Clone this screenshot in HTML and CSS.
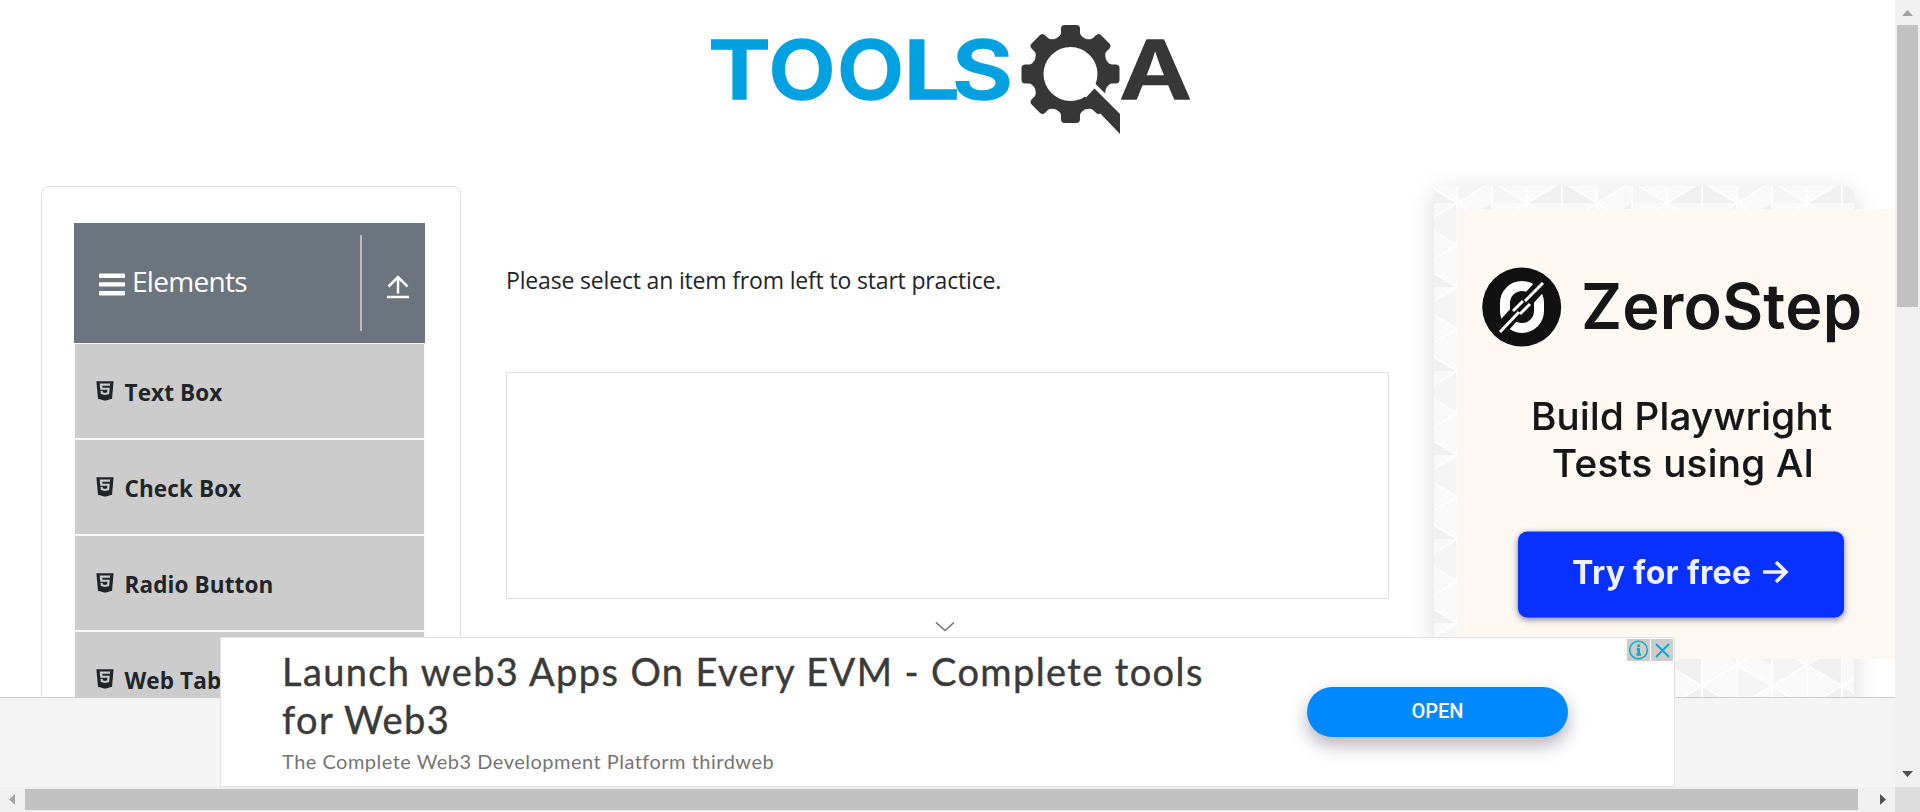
FILE: index.html
```html
<!DOCTYPE html>
<html lang="en">
<head>
<meta charset="utf-8">
<title>ToolsQA</title>
<link rel="stylesheet" href="styles.css">
</head>
<body>
<svg class="defs" width="0" height="0" aria-hidden="true">
  <symbol id="html5" viewBox="0 0 1024 1024">
    <path fill-rule="evenodd" d="M145 96l66 746.600L512 928l299.600-85.400L878.900 96H145zM720.900 286.300H396.100l7.700 89.200h309.500l-23.500 262.500-177.800 49.900-177.400-49.900-12-135.800h86.900l6.200 68.200 96.300 26.400 96.600-26.400 10.200-112.300H311.900l-23.800-262.100h441z"/>
  </symbol>
</svg>
<div class="window">
  <div class="page">
    <header class="top">
      <svg class="logo" width="520" height="160" viewBox="0 0 520 160" role="img" aria-label="ToolsQA">
        <g class="logo-blue">
          <text x="18" y="99" textLength="63" lengthAdjust="spacingAndGlyphs">T</text>
          <text x="78.500" y="99" textLength="67" lengthAdjust="spacingAndGlyphs">O</text>
          <text x="147" y="99" textLength="67" lengthAdjust="spacingAndGlyphs">O</text>
          <text x="213" y="99" textLength="57" lengthAdjust="spacingAndGlyphs">L</text>
          <text x="262" y="99" textLength="61" lengthAdjust="spacingAndGlyphs">S</text>
        </g>
        <g fill="#373737" transform="translate(380.500 74)">
          <mask id="ring"><rect x="-60" y="-60" width="120" height="130" fill="#fff"/><circle r="27" fill="#000"/><path d="M12 20 L24 9 L66 50 L66 75 Z" fill="#000"/></mask>
          <g mask="url(#ring)">
            <circle r="38.500"/>
            <path id="tooth" d="M-14 -36 Q-10 -38 -9.500 -41 V-45 Q-9.500 -49 -6 -49 H6 Q9.500 -49 9.500 -45 V-41 Q10 -38 14 -36 Z"/>
            <use href="#tooth" transform="rotate(45)"/><use href="#tooth" transform="rotate(90)"/><use href="#tooth" transform="rotate(135)"/>
            <use href="#tooth" transform="rotate(180)"/><use href="#tooth" transform="rotate(225)"/><use href="#tooth" transform="rotate(270)"/><use href="#tooth" transform="rotate(315)"/>
          </g>
          <path d="M15 24 L24 14.500 L49.500 40 V60 Z"/>
        </g>
        <text class="logo-dark" x="429.500" y="99" textLength="72" lengthAdjust="spacingAndGlyphs">A</text>
      </svg>
    </header>
    <div class="columns">
      <aside class="card">
        <div class="group">
          <svg class="bars" width="26" height="23" viewBox="0 0 26 23" fill="#fff"><rect y="0.500" width="26" height="4.400" rx="1.200"/><rect y="9.200" width="26" height="4.400" rx="1.200"/><rect y="18" width="26" height="4.400" rx="1.200"/></svg>
          <span class="group-name">Elements</span>
          <span class="divider"></span>
          <svg class="up" width="22" height="24" viewBox="0 0 22 24" fill="none" stroke="#fff" stroke-width="2.500"><path d="M11 18.500V2M1.500 11.500L11 2l9.500 9.500M0 22h22"/></svg>
        </div>
        <ul class="menu">
          <li><svg class="h5"><use href="#html5"/></svg><span>Text Box</span></li>
          <li><svg class="h5"><use href="#html5"/></svg><span>Check Box</span></li>
          <li><svg class="h5"><use href="#html5"/></svg><span>Radio Button</span></li>
          <li><svg class="h5"><use href="#html5"/></svg><span>Web Tables</span></li>
        </ul>
      </aside>
      <main class="content">
        <p class="hint"><span>Please select an item from left to start practice.</span></p>
        <div class="slot"></div>
      </main>
      <aside class="promo">
        <svg class="tiles" width="420" height="520">
          <pattern id="tri" x="23" y="17" width="140" height="84" patternUnits="userSpaceOnUse">
            <rect width="140" height="84" fill="#f9f9f9"/>
            <path fill="#f0f0f0" d="M70 84L105 63V84ZM105 84V63L140 84ZM70 42L105 21V63ZM0 21L35 0V42Z"/>
            <path fill="#f5f5f5" d="M35 84V63L70 84ZM35 21L70 42L35 63ZM0 42L35 63L0 84ZM105 21L140 0V42Z"/>
            <path fill="none" stroke="#fff" stroke-width="1.600" d="M0 0V84M35 0V84M70 0V84M105 0V84M140 0V84M0 0L140 84M0 84L140 0M0 42L70 84L140 42L70 0Z"/>
          </pattern>
          <rect width="420" height="520" fill="url(#tri)"/>
        </svg>
        <svg class="ad" width="438" height="450" viewBox="0 0 438 450">
          <rect width="438" height="450" fill="#fdf8f2"/>
          <g class="soft">
            <circle cx="64.700" cy="98" r="39.500" fill="#111"/>
            <g fill="none" stroke="#fff" stroke-width="10">
              <rect x="48" y="77" width="34" height="42" rx="17"/>
              <path stroke="#111" stroke-width="13" d="M42 122L87 73"/>
              <path stroke-width="3" d="M43 123L62 103M68 92L86 74M56 102L66 92M63 105L73 95"/>
            </g>
            <text class="brand" x="124" y="119.500" textLength="281">ZeroStep</text>
            <text class="tag" x="74" y="221" textLength="301">Build Playwright</text>
            <text class="tag" x="95" y="268" textLength="262">Tests using AI</text>
            <rect class="cta" x="61" y="322.500" width="326" height="86" rx="9"/>
            <text class="cta-text" x="115" y="374.500" textLength="179">Try for free</text>
            <path fill="none" stroke="#eef1ff" stroke-width="3.600" d="M306 363H328M319 353L329 363L319 373"/>
          </g>
        </svg>
      </aside>
    </div>
    <footer class="foot"></footer>
    <div class="banner">
      <svg class="collapse" width="20" height="10" viewBox="0 0 20 10" fill="none" stroke="#777" stroke-width="1.600"><path d="M1 0.500L10 8.500L19 0.500"/></svg>
      <div class="copy">
        <div class="headline"><span>Launch web3 Apps On Every EVM - Complete tools</span><br><span>for Web3</span></div>
        <div class="sub"><span>The Complete Web3 Development Platform thirdweb</span></div>
      </div>
      <div class="open"><span>OPEN</span></div>
      <div class="choices">
        <svg width="23" height="22" viewBox="0 0 23 22"><rect width="23" height="22" fill="#ccc"/><circle cx="11.500" cy="11" r="8.800" fill="none" stroke="#00aecd" stroke-width="1.500"/><path fill="none" stroke="#00aecd" stroke-width="2.600" d="M11.700 9.200V16M11.700 5.500V8M9.800 10H12M9.500 15.500H14"/></svg>
        <svg width="22" height="22" viewBox="0 0 22 22"><rect width="22" height="22" fill="#ccc"/><path fill="none" stroke="#00aecd" stroke-width="1.900" d="M5 5L18 18M18 5L5 18"/></svg>
      </div>
    </div>
  </div>
  <div class="vbar">
    <svg width="25" height="25"><path d="M7 16L12.500 10L18 16Z" fill="#a3a3a3"/></svg>
    <div class="vthumb"></div>
    <svg width="25" height="25"><path d="M7 9L12.500 15L18 9Z" fill="#505050"/></svg>
  </div>
  <div class="hbar">
    <svg width="25" height="25"><path d="M15 7L9 12.500L15 18Z" fill="#a3a3a3"/></svg>
    <div class="hthumb"></div>
    <svg width="25" height="25"><path d="M10 7L16 12.500L10 18Z" fill="#505050"/></svg>
  </div>
  <div class="corner"></div>
</div>
</body>
</html>
```
FILE: styles.css
```css
* { box-sizing: border-box; }
body { margin: 0; background: #fff; color: #212529; font-family: "Open Sans", "Noto Sans", sans-serif; overflow: hidden; }
svg { display: block; flex: none; }
.defs { position: absolute; }
.window { display: grid; grid-template: 787px 25px / 1895px 25px; }
.page { position: relative; overflow: hidden; display: flex; flex-direction: column; }

.top { flex: none; height: 186px; padding-left: 690px; }
.logo text { font-family: Inter, sans-serif; font-weight: 600; font-size: 81px; stroke-width: 1.500px; }
.logo-blue { fill: #00a1e0; stroke: #00a1e0; }
.logo-dark { fill: #373737; stroke: #373737; stroke-linejoin: round; }

.columns { flex: none; height: 511px; overflow: visible; display: flex; align-items: flex-start; padding-left: 41px; clip-path: inset(-40px 0 0 0); }
.card { width: 420px; height: 600px; border: 1px solid #dfdfdf; border-radius: 8px; padding: 36px 35px 0 32px; }
.group { height: 120px; background: #6c757d; display: flex; align-items: center; color: #fff; padding-left: 25px; }
.bars { margin-top: 3px; }
.group-name { width: 228px; margin-left: 7px; font-size: 28px; line-height: 40px; letter-spacing: -0.7px; margin-top: -4px; }
.divider { width: 2px; height: 96px; background: #bdbdbd; }
.up { margin-left: 25px; margin-top: 7px; }
.menu { list-style: none; margin: 0; padding: 0; }
.menu li { height: 96px; border: 1px solid #f8f9fa; background: #ccc; display: flex; align-items: center; padding-left: 18px; font-weight: 700; font-size: 22.500px; line-height: 36px; letter-spacing: 0.12px; }
.h5 { width: 24px; height: 24px; fill: #212529; margin-top: -1px; }
.menu span { margin-left: 7.500px; margin-top: 4px; white-space: nowrap; }

.content { width: 883px; margin-left: 45px; }
.hint { margin: 76px 0 73px; height: 37px; font-size: 23px; line-height: 37px; letter-spacing: -0.17px; white-space: nowrap; }
.slot { height: 227px; border: 1px solid #e0e0e0; }

.promo { width: 420px; height: 600px; margin-left: 45px; border-radius: 0 8px 0 0; box-shadow: 0 6px 26px rgba(0,0,0,.15); display: grid; }
.promo > svg { grid-area: 1 / 1; }
.tiles { border-radius: 0 8px 0 0; }
.ad { margin: 23px 0 0 23px; }
.ad text { font-family: Inter, sans-serif; fill: #161616; }
.soft { filter: blur(.7px); }
.ad .brand { font-size: 63px; font-weight: 600; }
.ad .tag { font-size: 38.500px; font-weight: 500; stroke: #161616; stroke-width: .2px; }
.cta { fill: #0830ff; filter: drop-shadow(0 2px 3px rgba(0,0,60,.5)); }
.ad .cta-text { font-size: 32px; font-weight: 700; fill: #eef1ff; }

.foot { flex: none; height: 90px; background: #f4f4f4; border-top: 1px solid #ccc; }

/* Anchored advert that floats above the page */
.banner { position: absolute; left: 220px; top: 637px; width: 1455px; height: 150px; background: #fff; border: 1px solid #e2e2e4; display: flex; align-items: flex-start; padding-left: 61px; font-family: Lato, sans-serif; white-space: nowrap; }
.collapse { position: absolute; left: 714px; top: -16px; }
.copy { width: 1025px; }
.headline { margin-top: 9px; font-size: 38px; line-height: 48px; color: #3a3a3a; letter-spacing: 1.38px; -webkit-text-stroke: .4px #3a3a3a; }
.sub { margin-top: 3px; font-size: 20px; line-height: 30px; color: #757575; letter-spacing: .49px; }
.open { width: 261px; height: 50px; margin-top: 49px; border-radius: 25px; background: #0088ff; color: #fff; display: flex; align-items: center; justify-content: center; font: 500 20px/50px Roboto, sans-serif; box-shadow: 0 8px 18px rgba(50,50,80,.38); }
.open span { margin-top: -2px; }
.choices { position: absolute; right: 1px; top: 1px; display: flex; gap: 1px; }

.vbar { background: #f0f0f0; display: flex; flex-direction: column; }
.vthumb { width: 21px; height: 282px; margin: 0 2px 455px; background: #c1c1c1; }
.hbar { background: #f0f0f0; display: flex; }
.hthumb { width: 1833px; height: 21px; margin: 2px 12px 2px 0; background: #c1c1c1; }
.corner { background: #dcdcdc; }
```
